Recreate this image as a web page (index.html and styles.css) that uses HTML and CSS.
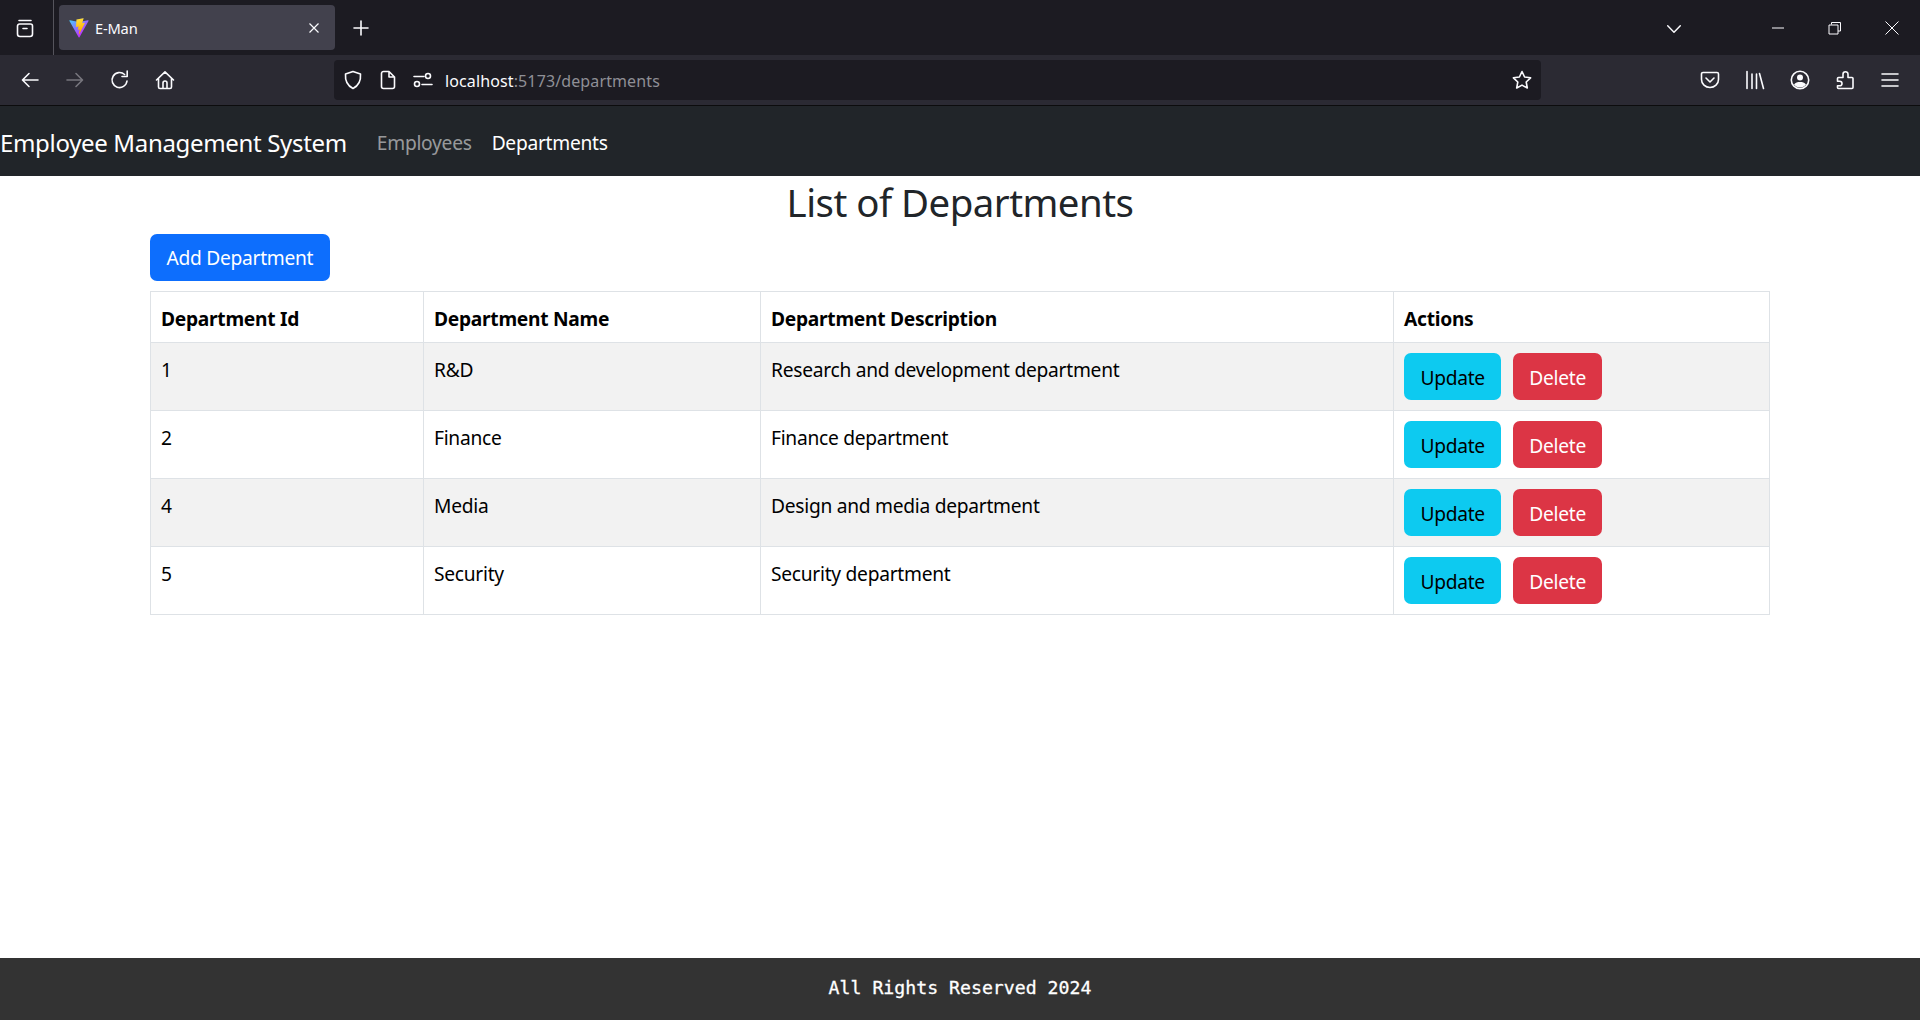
FILE: index.html
```html
<!DOCTYPE html>
<html lang="en">
<head>
    <meta charset="UTF-8">
    <title>E-Man</title>
    <link rel="stylesheet" href="styles.css">
</head>
<body>

<div class="tabstrip">
    <div class="tabs-btn">
        <svg class="icon" viewBox="0 0 20 20"><path d="M4 2.500h12M2.500 8a2 2 0 0 1 2-2h11a2 2 0 0 1 2 2v8a2.500 2.500 0 0 1-2.500 2.500H5A2.500 2.500 0 0 1 2.500 16zM8 10.500h4"/></svg>
    </div>
    <div class="tab">
        <svg class="favicon" viewBox="0 0 410 404">
            <defs>
                <linearGradient id="viteA" x1="6" y1="33" x2="235" y2="344" gradientUnits="userSpaceOnUse"><stop offset="0" stop-color="#41D1FF"/><stop offset="1" stop-color="#BD34FE"/></linearGradient>
                <linearGradient id="viteB" x1="194" y1="8" x2="236" y2="292" gradientUnits="userSpaceOnUse"><stop offset="0" stop-color="#FFEA83"/><stop offset=".08" stop-color="#FFDD35"/><stop offset="1" stop-color="#FFA800"/></linearGradient>
            </defs>
            <path fill="url(#viteA)" d="M399.600 59.500 215 389.700c-3.800 6.800-13.600 6.900-17.500.1L9.300 59.500c-4.200-7.400 2.100-16.400 10.500-14.900l184.800 33c1.200.2 2.400.2 3.600 0l180.900-33c8.300-1.500 14.700 7.400 10.500 14.900z"/>
            <path fill="url(#viteB)" d="M292.900 1.600 156.300 28.400c-2.200.4-3.900 2.300-4 4.600l-8.400 141.900c-.2 3.300 2.900 5.900 6.100 5.200l38-8.800c3.600-.8 6.800 2.300 6.100 5.900l-11.300 55.300c-.8 3.700 2.800 6.900 6.400 5.800l23.500-7.100c3.600-1.100 7.100 2.100 6.400 5.800l-18 87.100c-1.100 5.400 6.100 8.400 9.100 3.700l2-3.100 111.400-222.400c1.900-3.700-1.300-8-5.400-7.200l-39.200 7.600c-3.700.7-6.800-2.700-5.800-6.300l25.600-88.700c1-3.600-2.100-7.100-5.900-6.300z"/>
        </svg>
        <span class="tab-title">E-Man</span>
        <svg class="tab-close" viewBox="0 0 12 12"><path d="M1.500 1.500l9 9M10.500 1.500l-9 9"/></svg>
    </div>
    <svg class="icon newtab" viewBox="0 0 20 20"><path d="M10 3v14M3 10h14"/></svg>
    <div class="spacer"></div>
    <svg class="icon tabs-list" viewBox="0 0 20 20"><path d="M3 6.500l7 7 7-7"/></svg>
    <svg class="win-icon win-min" viewBox="0 0 14 14"><path d="M1 7h12"/></svg>
    <svg class="win-icon win-restore" viewBox="0 0 14 14"><path d="M3.500 3.500V1.500h9v8.500h-2.500M1 4h9v9H1z"/></svg>
    <svg class="win-icon win-close" viewBox="0 0 14 14"><path d="M.5.5l13 13M13.500.5l-13 13"/></svg>
</div>

<div class="toolbar">
    <svg class="icon nav-back" viewBox="0 0 20 20"><path d="M18 10H3M9 3.500L2.500 10 9 16.500"/></svg>
    <svg class="icon nav-forward" viewBox="0 0 20 20"><path d="M2 10h15M11 3.500l6.500 6.500-6.500 6.500"/></svg>
    <svg class="icon nav-reload" viewBox="0 0 20 20"><path d="M17 11a7.500 7.500 0 1 1-2.400-6.500M17.200 1v5.500H12"/></svg>
    <svg class="icon nav-home" viewBox="0 0 20 20"><path d="M1.500 10L10 1.800 18.500 10M3.500 8.500V17a1.500 1.500 0 0 0 1.500 1.500h10a1.500 1.500 0 0 0 1.500-1.500V8.500M8 18.500V13a2 2 0 0 1 4 0v5.500"/></svg>
    <div class="urlbar">
        <svg class="icon url-shield" viewBox="0 0 20 20"><path d="M10 1.500l7.500 2.500c.5 6.500-1.500 11.500-7.500 14.500C4 15.500 2 10.500 2.500 4z"/></svg>
        <svg class="icon url-page" viewBox="0 0 20 20"><path d="M3.500 3.500a2 2 0 0 1 2-2H11l5.500 5.500v9.500a2 2 0 0 1-2 2h-9a2 2 0 0 1-2-2zM11 1.500V7h5.500"/></svg>
        <svg class="icon url-perm" viewBox="0 0 20 20"><path d="M1 6.500h10M9 14.500h10"/><circle cx="15" cy="6" r="2.500"/><circle cx="4" cy="14" r="2.500"/></svg>
        <span class="url-text">localhost<span class="url-dim">:5173/departments</span></span>
        <div class="spacer"></div>
        <svg class="icon url-star" viewBox="0 0 20 20"><path d="M10 1.500l2.600 5.500 6 .8-4.400 4.200 1.100 6L10 15.100 4.700 18l1.100-6L1.400 7.800l6-.8z"/></svg>
    </div>
    <div class="spacer"></div>
    <svg class="icon tool-pocket" viewBox="0 0 20 20"><path d="M1.500 4a1.500 1.500 0 0 1 1.500-1.500h14A1.500 1.500 0 0 1 18.500 4v5.500c0 4.500-3.800 8-8.500 8s-8.500-3.500-8.500-8zM6 8l4 4 4-4"/></svg>
    <svg class="icon tool-library" viewBox="0 0 20 20"><path d="M2 1.500v17M7 4v14.500M11.500 4v14.500M14.500 3.500l4 15"/></svg>
    <svg class="icon tool-account" viewBox="0 0 20 20"><circle cx="10" cy="10" r="8.700"/><circle class="fill-dot" cx="10" cy="7.500" r="3"/><path class="fill-dot" d="M4 14.500c1.500-2 3.500-2.500 6-2.500s4.500.5 6 2.500c-1.500 2-3.500 3-6 3s-4.500-1-6-3z"/></svg>
    <svg class="icon tool-ext" viewBox="0 0 20 20"><path d="M7 18.500H3.500a1 1 0 0 1-1-1v-1.700h2.200a2.300 2.300 0 0 0 0-4.600H2.500V8.500a1 1 0 0 1 1-1H8V4.200a2.500 2.500 0 0 1 5 0v3.300h4a1 1 0 0 1 1 1v9a1 1 0 0 1-1 1z"/></svg>
    <svg class="icon tool-menu" viewBox="0 0 20 20"><path d="M2 4h16M2 10h16M2 16h16"/></svg>
</div>

<nav class="navbar">
    <a class="brand" href="#">Employee Management System</a>
    <a class="nav-link" href="#">Employees</a>
    <a class="nav-link active" href="#">Departments</a>
</nav>

<main class="content">
    <h2 class="page-title">List of Departments</h2>
    <a class="btn btn-primary" href="#">Add Department</a>
    <table class="dept-table">
        <thead>
            <tr>
                <th class="col-id">Department Id</th>
                <th class="col-name">Department Name</th>
                <th class="col-desc">Department Description</th>
                <th>Actions</th>
            </tr>
        </thead>
        <tbody>
            <tr>
                <td>1</td>
                <td>R&amp;D</td>
                <td>Research and development department</td>
                <td><button class="btn btn-info">Update</button><button class="btn btn-danger">Delete</button></td>
            </tr>
            <tr>
                <td>2</td>
                <td>Finance</td>
                <td>Finance department</td>
                <td><button class="btn btn-info">Update</button><button class="btn btn-danger">Delete</button></td>
            </tr>
            <tr>
                <td>4</td>
                <td>Media</td>
                <td>Design and media department</td>
                <td><button class="btn btn-info">Update</button><button class="btn btn-danger">Delete</button></td>
            </tr>
            <tr>
                <td>5</td>
                <td>Security</td>
                <td>Security department</td>
                <td><button class="btn btn-info">Update</button><button class="btn btn-danger">Delete</button></td>
            </tr>
        </tbody>
    </table>
</main>

<footer class="footer">All Rights Reserved 2024</footer>

</body>
</html>
```

FILE: styles.css
```css
* {
    box-sizing: border-box;
}
html, body {
    height: 100%;
}
body {
    margin: 0;
    height: 1020px;
    display: flex;
    flex-direction: column;
    overflow: hidden;
    font-family: "Noto Sans", sans-serif;
    font-size: 19.2px;
    letter-spacing: -0.27px;
    color: #212529;
    background-color: #fff;
}
.spacer {
    flex: 1;
}

/* browser chrome */
.icon {
    width: 20px;
    height: 20px;
    flex: none;
    fill: none;
    stroke: #fbfbfe;
    stroke-width: 1.6;
    stroke-linecap: round;
    stroke-linejoin: round;
}
.tabstrip {
    height: 55px;
    flex: none;
    display: flex;
    align-items: center;
    background-color: #1c1b22;
}
.tabs-btn {
    width: 54px;
    height: 55px;
    flex: none;
    display: flex;
    align-items: center;
    padding-left: 15px;
    border-right: 1px solid #55545c;
}
.tab {
    width: 276px;
    height: 45px;
    flex: none;
    margin-left: 5px;
    display: flex;
    align-items: center;
    padding: 0 15px 0 10px;
    border-radius: 4px;
    background-color: #42414d;
    color: #fbfbfe;
}
.favicon {
    width: 20px;
    height: 20px;
    flex: none;
}
.tab-title {
    margin-left: 6px;
    flex: 1;
    font-size: 14.7px;
    letter-spacing: -0.2px;
}
.tab-close {
    width: 12px;
    height: 12px;
    fill: none;
    stroke: #fbfbfe;
    stroke-width: 1.2;
}
.newtab {
    margin-left: 16px;
    margin-top: 1px;
}
.tabs-list {
    width: 18px;
    height: 18px;
    margin-top: 2px;
    margin-right: 88px;
}
.win-icon {
    width: 14px;
    height: 14px;
    flex: none;
    fill: none;
    stroke: #fbfbfe;
    stroke-width: 1;
}
.win-restore {
    margin-left: 43px;
}
.win-close {
    margin-left: 43px;
    margin-right: 21px;
}
.toolbar {
    height: 51px;
    flex: none;
    display: flex;
    align-items: center;
    padding: 0 20px 1px 20px;
    background-color: #2b2a33;
    border-bottom: 1px solid #0c0c0d;
}
.nav-forward {
    margin-left: 25px;
    stroke: #77767d;
}
.nav-reload {
    margin-left: 25px;
}
.nav-home {
    margin-left: 25px;
}
.urlbar {
    width: 1207px;
    height: 40px;
    flex: none;
    margin-left: 159px;
    display: flex;
    align-items: center;
    padding: 0 9px 0 9px;
    border-radius: 4px;
    background-color: #1c1b22;
}
.url-page {
    margin-left: 15px;
}
.url-perm {
    margin-left: 15px;
}
.url-text {
    margin-left: 12px;
    padding-top: 3px;
    font-size: 16px;
    letter-spacing: 0.12px;
    color: #fbfbfe;
}
.url-dim {
    color: #8f8f96;
}
.tool-library {
    margin-left: 25px;
}
.tool-account {
    margin-left: 25px;
}
.tool-ext {
    margin-left: 25px;
}
.tool-menu {
    margin-left: 25px;
}
.fill-dot {
    fill: #fbfbfe;
    stroke: none;
}

/* app navbar */
.navbar {
    height: 70px;
    flex: none;
    display: flex;
    align-items: center;
    padding-top: 2px;
    background-color: #212529;
}
.brand {
    margin-right: 20px;
    font-size: 24px;
    letter-spacing: -0.33px;
    color: #fff;
    text-decoration: none;
    white-space: nowrap;
}
.nav-link {
    padding: 0 10px;
    color: rgba(255, 255, 255, 0.55);
    text-decoration: none;
    white-space: nowrap;
}
.nav-link.active {
    color: #fff;
}

/* page */
.content {
    flex: 1;
    padding: 0 150px;
}
.page-title {
    margin: 0 0 9px;
    padding-top: 3px;
    text-align: center;
    font-size: 38.4px;
    font-weight: 400;
    letter-spacing: -0.52px;
    line-height: 1.2;
}
.btn {
    display: inline-block;
    height: 47px;
    padding: 2px 15.4px 0;
    border: 1px solid transparent;
    border-radius: 7px;
    font-family: inherit;
    font-size: 19.2px;
    letter-spacing: -0.27px;
    line-height: 42px;
    text-decoration: none;
}
.btn-primary {
    background-color: #0d6efd;
    color: #fff;
}
.btn-info {
    background-color: #0dcaf0;
    color: #000;
}
.btn-danger {
    margin-left: 12px;
    padding: 2px 15px 0;
    background-color: #dc3545;
    color: #fff;
}
.dept-table {
    width: 1620px;
    margin-top: 10px;
    table-layout: fixed;
    border-collapse: collapse;
}
.dept-table th, .dept-table td {
    padding: 10px;
    border: 1px solid #dee2e6;
    text-align: left;
    vertical-align: top;
    line-height: 29px;
}
.dept-table th {
    color: #000;
    height: 51px;
    padding-top: 12px;
    padding-bottom: 8px;
}
.dept-table td {
    color: #000;
    height: 68px;
    padding-top: 10px;
}
.dept-table tbody td:not(:last-child) {
    padding-top: 12px;
}
.dept-table tbody tr:nth-child(odd) {
    background-color: #f2f2f2;
}
.col-id {
    width: 273px;
}
.col-name {
    width: 337px;
}
.col-desc {
    width: 633px;
}

.footer {
    height: 62px;
    flex: none;
    display: flex;
    align-items: center;
    justify-content: center;
    padding-bottom: 4px;
    background-color: #333;
    color: #fff;
    font-family: "DejaVu Sans Mono", monospace;
    font-size: 18.2px;
    letter-spacing: 0;
    -webkit-text-stroke: 0.3px #fff;
}
```
